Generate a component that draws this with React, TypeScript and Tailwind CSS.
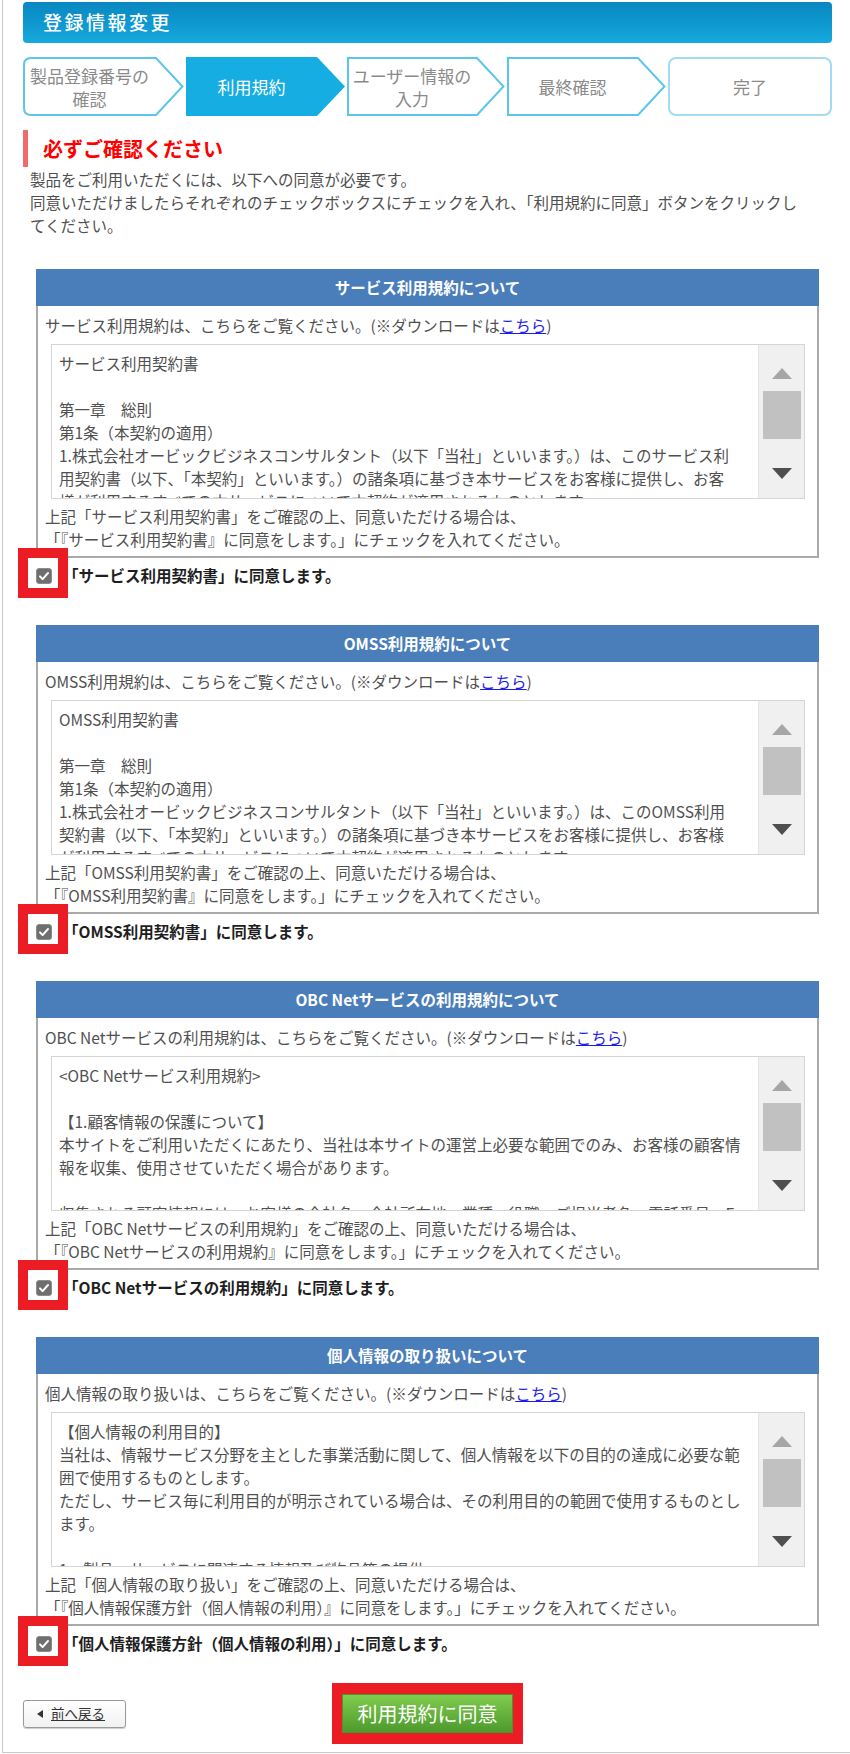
import React from "react";

type Terms = {
  title: string;
  name: string;
  lines: string[];
  confirm: [string, string];
  label: string;
};

const sections: Terms[] = [
  {
    title: "サービス利用規約について",
    name: "サービス利用規約",
    lines: [
      "サービス利用契約書",
      "",
      "第一章　総則",
      "第1条（本契約の適用）",
      "1.株式会社オービックビジネスコンサルタント（以下「当社」といいます。）は、このサービス利",
      "用契約書（以下、「本契約」といいます。）の諸条項に基づき本サービスをお客様に提供し、お客",
      "様が利用するすべての本サービスについて本契約が適用されるものとします。",
    ],
    confirm: [
      "上記「サービス利用契約書」をご確認の上、同意いただける場合は、",
      "「『サービス利用契約書』に同意をします。」にチェックを入れてください。",
    ],
    label: "「サービス利用契約書」に同意します。",
  },
  {
    title: "OMSS利用規約について",
    name: "OMSS利用規約",
    lines: [
      "OMSS利用契約書",
      "",
      "第一章　総則",
      "第1条（本契約の適用）",
      "1.株式会社オービックビジネスコンサルタント（以下「当社」といいます。）は、このOMSS利用",
      "契約書（以下、「本契約」といいます。）の諸条項に基づき本サービスをお客様に提供し、お客様",
      "が利用するすべての本サービスについて本契約が適用されるものとします。",
    ],
    confirm: [
      "上記「OMSS利用契約書」をご確認の上、同意いただける場合は、",
      "「『OMSS利用契約書』に同意をします。」にチェックを入れてください。",
    ],
    label: "「OMSS利用契約書」に同意します。",
  },
  {
    title: "OBC Netサービスの利用規約について",
    name: "OBC Netサービスの利用規約",
    lines: [
      "<OBC Netサービス利用規約>",
      "",
      "【1.顧客情報の保護について】",
      "本サイトをご利用いただくにあたり、当社は本サイトの運営上必要な範囲でのみ、お客様の顧客情",
      "報を収集、使用させていただく場合があります。",
      "",
      "収集される顧客情報には、お客様の会社名、会社所在地、業種、役職、ご担当者名、電話番号、E",
    ],
    confirm: [
      "上記「OBC Netサービスの利用規約」をご確認の上、同意いただける場合は、",
      "「『OBC Netサービスの利用規約』に同意をします。」にチェックを入れてください。",
    ],
    label: "「OBC Netサービスの利用規約」に同意します。",
  },
  {
    title: "個人情報の取り扱いについて",
    name: "個人情報の取り扱い",
    lines: [
      "【個人情報の利用目的】",
      "当社は、情報サービス分野を主とした事業活動に関して、個人情報を以下の目的の達成に必要な範",
      "囲で使用するものとします。",
      "ただし、サービス毎に利用目的が明示されている場合は、その利用目的の範囲で使用するものとし",
      "ます。",
      "",
      "1．製品・サービスに関連する情報及び物品等の提供",
    ],
    confirm: [
      "上記「個人情報の取り扱い」をご確認の上、同意いただける場合は、",
      "「『個人情報保護方針（個人情報の利用）』に同意をします。」にチェックを入れてください。",
    ],
    label: "「個人情報保護方針（個人情報の利用）」に同意します。",
  },
];

type Step = {
  lines: string[];
  kind: "first" | "active" | "mid" | "last";
  w: number;
  cls: string;
};

const steps: Step[] = [
  { lines: ["製品登録番号の", "確認"], kind: "first", w: 161, cls: "w-[161px]" },
  { lines: ["利用規約"], kind: "active", w: 159, cls: "w-[159px]" },
  { lines: ["ユーザー情報の", "入力"], kind: "mid", w: 158, cls: "w-[158px]" },
  { lines: ["最終確認"], kind: "mid", w: 159, cls: "w-[159px]" },
  { lines: ["完了"], kind: "last", w: 164, cls: "w-[164px]" },
];

const ARROW = 28;
const STEP_H = 59;

function StepShape({ step }: { step: Step }) {
  const w = step.w;
  const m = STEP_H / 2;
  if (step.kind === "active") {
    return (
      <svg className="absolute inset-0" width={w} height={STEP_H} viewBox={`0 0 ${w} ${STEP_H}`}>
        <path d={`M0 0 H${w - ARROW} L${w} ${m} L${w - ARROW} ${STEP_H} H0 Z`} fill="#16ade3" />
      </svg>
    );
  }
  if (step.kind === "last") {
    return (
      <svg className="absolute inset-0" width={w} height={STEP_H} viewBox={`0 0 ${w} ${STEP_H}`}>
        <rect x="1" y="1" width={w - 2} height={STEP_H - 2} rx="7" fill="#fff" stroke="#a3dcf2" strokeWidth="2" />
      </svg>
    );
  }
  const d =
    step.kind === "first"
      ? `M8 1 H${w - ARROW} L${w - 1.5} ${m} L${w - ARROW} ${STEP_H - 1} H8 Q1 ${STEP_H - 1} 1 ${STEP_H - 8} V8 Q1 1 8 1 Z`
      : `M1 1 H${w - ARROW} L${w - 1.5} ${m} L${w - ARROW} ${STEP_H - 1} H1 Z`;
  return (
    <svg className="absolute inset-0" width={w} height={STEP_H} viewBox={`0 0 ${w} ${STEP_H}`}>
      <path d={d} fill="#fff" stroke="#5cc5ec" strokeWidth="2" />
    </svg>
  );
}

function StepBox({ step }: { step: Step }) {
  return (
    <div className={`relative h-[59px] shrink-0 ${step.cls}`}>
      <StepShape step={step} />
      <div
        className={
          "relative flex h-full flex-col items-center justify-center text-[17px] leading-[23px] " +
          (step.kind === "last" ? "" : "pr-[28px] ") +
          (step.kind === "active" ? "text-white" : "text-[#8a8a8a]")
        }
      >
        {step.lines.map((l) => (
          <span key={l} className="whitespace-nowrap">
            {l}
          </span>
        ))}
      </div>
    </div>
  );
}

function Scrollbar() {
  return (
    <div className="flex w-[46px] shrink-0 flex-col items-center border-l border-[#e4e4e4] bg-[#f0f0f0]">
      <svg className="mt-[23px] h-[11px] w-[20px]" viewBox="0 0 20 11">
        <path d="M10 0 L20 11 H0 Z" fill="#a6a6a6" />
      </svg>
      <div className="mt-[12px] h-[48px] w-[38px] bg-[#c1c1c1]" />
      <svg className="mt-[29px] h-[11px] w-[20px]" viewBox="0 0 20 11">
        <path d="M0 0 H20 L10 11 Z" fill="#4f4f4f" />
      </svg>
    </div>
  );
}

function Checkbox() {
  return (
    <span className="relative flex h-4 w-4 shrink-0">
      {/* red highlight frame */}
      <span className="absolute top-[-20px] bottom-[-14px] left-[-18px] right-[-16px] border-[10px] border-[#ec1c24]" />
      <svg viewBox="0 0 16 16" className="relative h-4 w-4">
        <rect x="0.5" y="0.5" width="15" height="15" rx="2.5" fill="#6f6f6f" stroke="#8c8c8c" />
        <path
          d="M4 8.4l2.6 2.7L12 5"
          fill="none"
          stroke="#fff"
          strokeWidth="2"
          strokeLinecap="round"
          strokeLinejoin="round"
        />
      </svg>
    </span>
  );
}

function TermsBlock({ s, last }: { s: Terms; last?: boolean }) {
  return (
    <section className={last ? "mx-[13px]" : "mx-[13px] mb-[31px]"}>
      <h2 className="flex h-[37px] items-center justify-center bg-[#4a7ebb] text-[15.5px] font-bold text-white">
        {s.title}
      </h2>
      <div className="border-2 border-t-0 border-[#a9a9a9] px-[7px] pt-[8px] pb-[5px]">
        <p className="whitespace-nowrap leading-[23px]">
          {s.name}は、こちらをご覧ください。(※ダウンロードは
          <a className="cursor-pointer text-[#1c1ce8] underline">こちら</a>)
        </p>
        <div className="mt-[7px] ml-[6px] mr-[5px] flex h-[155px] overflow-hidden border border-[#d5d5d5]">
          <div className="min-w-0 flex-1 overflow-hidden pt-[7px] pl-[7px]">
            {s.lines.map((l, i) => (
              <div key={i} className="h-[23px] whitespace-nowrap leading-[23px]">
                {l || "\u00a0"}
              </div>
            ))}
          </div>
          <Scrollbar />
        </div>
        <div className="mt-[6px] leading-[23px]">
          <p className="whitespace-nowrap">{s.confirm[0]}</p>
          <p className="whitespace-nowrap">{s.confirm[1]}</p>
        </div>
      </div>
      <div className="flex h-[36px] items-center gap-[11px]">
        <Checkbox />
        <span className="whitespace-nowrap font-bold text-[#1e1e1e]">{s.label}</span>
      </div>
    </section>
  );
}

export default function App() {
  return (
    <div className="h-[1754px] w-[850px] bg-white font-['Noto_Sans_CJK_JP','Noto_Sans',sans-serif] text-[15.5px] text-[#505050]">
      <div className="ml-[2px] h-[1753px] border-b border-l border-[#c9c9c9] pt-[2px] pl-[20px]">
        <div className="w-[809px]">
          <header className="flex h-[41px] items-center rounded-[4px] bg-linear-to-b from-[#0a87c0] via-[#0e97cf] to-[#16aadf] pl-[20px]">
            <h1 className="text-[19px] font-medium tracking-[2.5px] text-white">登録情報変更</h1>
          </header>

          <div className="mt-[14px] flex gap-[2px]">
            {steps.map((st) => (
              <StepBox key={st.lines[0]} step={st} />
            ))}
          </div>

          <div className="mt-[14px] flex h-[37px] items-center border-l-[5px] border-[#f06b6b] pl-[15px]">
            <span className="text-[20px] font-bold text-[#ff0000]">必ずご確認ください</span>
          </div>

          <p className="mt-[1px] ml-[7px] whitespace-nowrap leading-[23px]">
            製品をご利用いただくには、以下への同意が必要です。
            <br />
            同意いただけましたらそれぞれのチェックボックスにチェックを入れ、「利用規約に同意」ボタンをクリックし
            <br />
            てください。
          </p>

          <div className="mt-[32px]">
            {sections.map((s, i) => (
              <TermsBlock key={s.title} s={s} last={i === sections.length - 1} />
            ))}
          </div>

          <div className="mt-[21px] grid grid-cols-[1fr_auto_1fr] items-center">
            <div>
              <button
                type="button"
                className="flex h-[28px] w-[103px] items-center gap-[8px] rounded-[3px] border border-[#9a9a9a] bg-linear-to-b from-white to-[#f1f1f1] pl-[13px] shadow-[0_1px_1px_rgba(0,0,0,0.2)]"
              >
                <svg viewBox="0 0 6 8" className="h-[8px] w-[6px]">
                  <path d="M6 0 V8 L0 4 Z" fill="#333" />
                </svg>
                <span className="text-[13.5px] text-[#333] underline">前へ戻る</span>
              </button>
            </div>
            <div className="border-x-[10px] border-y-[11px] border-[#ec1c24]">
              <button
                type="button"
                className="flex h-[39px] w-[171px] items-center justify-center border border-[#4d9330] bg-linear-to-b from-[#80cc4e] to-[#4c9a2d] text-[20px] text-white"
              >
                利用規約に同意
              </button>
            </div>
            <div />
          </div>
        </div>
      </div>
    </div>
  );
}
